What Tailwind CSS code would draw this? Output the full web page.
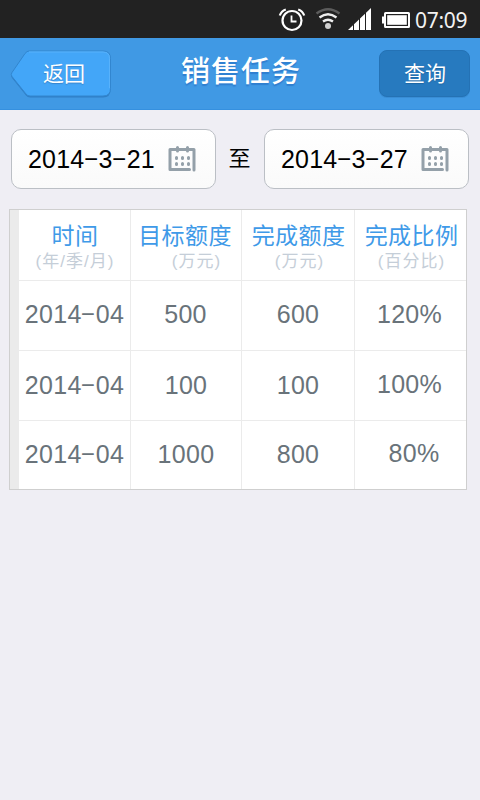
<!DOCTYPE html>
<html lang="zh-CN">
<head>
<meta charset="utf-8">
<title>销售任务</title>
<script src="https://cdn.jsdelivr.net/npm/@tailwindcss/browser@4"></script>
</head>
<body class="w-[480px] h-[800px] overflow-hidden bg-[#efeef4] font-['Liberation_Sans','Noto_Sans_CJK_SC',sans-serif]">
<div class="h-[38px] bg-[#222222] flex items-center text-white">
  <svg class="ml-[278px] w-[28px] h-[38px] shrink-0" viewBox="278 0 28 38" fill="none" stroke="#fff">
    <circle cx="292" cy="20.5" r="9.5" stroke-width="2.2"/>
    <path d="M291.5 15.5v6h5" stroke-width="1.8"/>
    <path d="M279.800 15.500q1.500-4.500 6-6M304.200 15.500q-1.500-4.500-6-6" stroke-width="2.200"/>
  </svg>
  <svg class="ml-[9px] w-[28px] h-[38px] shrink-0" viewBox="315 0 28 38" fill="none" stroke-width="2.300">
    <path d="M316.500 13.500q11.500-8.500 23 0" stroke="#5c5c5c"/>
    <path d="M319.500 17.500q8.500-6.500 17 0M323 21.500q5-3.500 10 0" stroke="#eee"/>
    <circle cx="328" cy="26" r="3" fill="#d0d0d0"/>
  </svg>
  <svg class="ml-[5px] w-[24px] h-[38px] shrink-0" viewBox="348 0 24 38">
    <path d="M348 30L371 8V30Z" fill="#fff"/>
    <path d="M353.500 20v10M359.500 15v15M365.500 8v22" stroke="#222" stroke-width="1"/>
  </svg>
  <svg class="ml-[9px] w-[30px] h-[38px] shrink-0" viewBox="381 0 30 38">
    <rect x="385" y="13" width="24" height="14" rx="0.500" fill="none" stroke="#fff" stroke-width="2"/>
    <rect x="387.200" y="15.200" width="19.600" height="9.600" fill="#fff"/>
    <rect x="382" y="16.500" width="3" height="7" fill="#fff"/>
  </svg>
  <span class="ml-[4px] mt-[2px] text-[21px] leading-[28px] tracking-[-0.3px] text-[#f2f2f2] font-['Noto_Sans',sans-serif]">07:09</span>
</div>

<div class="h-[72px] bg-[#4099e4] border-b border-[#3590df] flex items-start justify-between pt-[12px] pl-[10px] pr-[10px]">
  <div class="grid w-[102px] h-[49px]">
    <svg class="col-start-1 row-start-1 w-[102px] h-[49px]" viewBox="0 0 102 49">
      <path d="M19 1.500H93Q100.500 1.500 100.500 9V40Q100.500 47.500 93 47.500H20Q17.500 47.500 16 45.500L2 28Q0.500 25.500 2 23.500L15 4Q17 1.500 19 1.500Z" fill="#2f7fc6"/>
      <path d="M19 1H93Q100.500 1 100.500 8.500V38.500Q100.500 46 93 46H20Q17.500 46 16 44L2 26.500Q0.500 24.500 2 22.500L15 3.500Q17 1 19 1Z" fill="#43a6f8" stroke="#3286cf"/>
      <path d="M19 2H93Q99.500 2 99.500 8.500V38" fill="none" stroke="#58b2fb"/>
    </svg>
    <span class="col-start-1 row-start-1 pl-[33px] pt-[9px] text-[21px] leading-[30px] text-white [text-shadow:0_1px_1px_#3784cc]">返回</span>
  </div>
  <h1 class="mt-[4px] ml-[-9px] text-[29px] leading-[36px] tracking-[1px] font-medium text-white [text-shadow:0_2px_1px_#2f7fd0]">销售任务</h1>
  <div class="w-[91px] h-[47px] rounded-[8px] bg-[#277abf] border border-[#2472b5] shadow-[0_1px_0_#388dd6] pt-[8px] pl-px text-center text-[21px] leading-[30px] text-white [text-shadow:0_1px_1px_#1d65a3]">查询</div>
</div>

<div class="flex pt-[19px] pl-[11px] text-[25px] leading-[30px] tracking-[0.2px] text-black">
  <div class="w-[205px] h-[60px] rounded-[10px] border border-[#bbbfc5] bg-linear-to-b from-white to-[#fafafa] flex items-center pl-[16px]">
    <span class="w-[140px] whitespace-nowrap">2014<span class="inline-block w-[14.1px] text-center"><span class="inline-block -translate-y-[2.500px] scale-x-[1.900] scale-y-[0.900]">-</span></span>3<span class="inline-block w-[14.1px] text-center"><span class="inline-block -translate-y-[2.500px] scale-x-[1.900] scale-y-[0.900]">-</span></span>21</span>
    <svg class="w-[28px] h-[28px]" viewBox="0 0 28 28" fill="none" stroke="#94a0a9" stroke-linecap="round">
      <path d="M26 25V4.500H2V24.500H21.500" stroke-width="3" stroke-linejoin="round"/>
      <path d="M9.500 2.500V6M19.500 2.500V6" stroke-width="3"/>
      <path d="M8.500 12.500v1M14.500 12.500v1M20.500 12.500v1M8.500 18.500v1M14.500 18.500v1M20.500 18.500v1" stroke-width="3"/>
    </svg>
  </div>
  <span class="w-[48px] pt-[15px] pr-px text-center text-[22px]">至</span>
  <div class="w-[205px] h-[60px] rounded-[10px] border border-[#bbbfc5] bg-linear-to-b from-white to-[#fafafa] flex items-center pl-[16px]">
    <span class="w-[140px] whitespace-nowrap">2014<span class="inline-block w-[14.1px] text-center"><span class="inline-block -translate-y-[2.500px] scale-x-[1.900] scale-y-[0.900]">-</span></span>3<span class="inline-block w-[14.1px] text-center"><span class="inline-block -translate-y-[2.500px] scale-x-[1.900] scale-y-[0.900]">-</span></span>27</span>
    <svg class="w-[28px] h-[28px]" viewBox="0 0 28 28" fill="none" stroke="#94a0a9" stroke-linecap="round">
      <path d="M26 25V4.500H2V24.500H21.500" stroke-width="3" stroke-linejoin="round"/>
      <path d="M9.500 2.500V6M19.500 2.500V6" stroke-width="3"/>
      <path d="M8.500 12.500v1M14.500 12.500v1M20.500 12.500v1M8.500 18.500v1M14.500 18.500v1M20.500 18.500v1" stroke-width="3"/>
    </svg>
  </div>
</div>

<div class="mt-[20px] ml-[9px] w-[458px] h-[281px] border border-[#cfcfcf] bg-[#ebebeb] pl-[9px]">
  <div class="grid h-full grid-cols-[111px_110px_112px_111px] grid-rows-[70px_69px_69px_68px] gap-px text-[25px] leading-[30px] tracking-[0.300px] text-[#69737a] *:bg-white *:flex *:items-center *:justify-center *:whitespace-nowrap">
    <div class="flex-col pt-[3px] pl-px text-[23px] tracking-[0.4px] text-[#3f9ae8]"><span>时间</span><span class="text-[17px] leading-[22px] tracking-[1px] text-[#c5ced8]">(年/季/月)</span></div>
    <div class="flex-col pt-[3px] pr-[2px] text-[23px] tracking-[0.4px] text-[#3f9ae8]"><span>目标额度</span><span class="pl-[23px] text-[17px] leading-[22px] tracking-[1px] text-[#c5ced8]">(万元)</span></div>
    <div class="flex-col pt-[3px] pl-px text-[23px] tracking-[0.4px] text-[#3f9ae8]"><span>完成额度</span><span class="pl-[2px] text-[17px] leading-[22px] tracking-[1px] text-[#c5ced8]">(万元)</span></div>
    <div class="flex-col pt-[3px] pl-[2px] text-[23px] tracking-[0.4px] text-[#3f9ae8]"><span>完成比例</span><span class="text-[17px] leading-[22px] tracking-[1px] text-[#c5ced8]">(百分比)</span></div>

    <div class="pb-[3px]"><span>2014<span class="inline-block w-[14.1px] text-center"><span class="inline-block -translate-y-[2.500px] scale-x-[1.900] scale-y-[0.900]">-</span></span>04</span></div>
    <div class="pb-[3px] pr-px">500</div>
    <div class="pb-[3px]">600</div>
    <div class="pb-[3px] pr-[2px]">120%</div>

    <div class="pb-[2px]"><span>2014<span class="inline-block w-[14.1px] text-center"><span class="inline-block -translate-y-[2.500px] scale-x-[1.900] scale-y-[0.900]">-</span></span>04</span></div>
    <div class="pb-[2px]">100</div>
    <div class="pb-[2px]">100</div>
    <div class="pb-[4px] pr-[2px]">100%</div>

    <div class="pb-[2px]"><span>2014<span class="inline-block w-[14.1px] text-center"><span class="inline-block -translate-y-[2.500px] scale-x-[1.900] scale-y-[0.900]">-</span></span>04</span></div>
    <div class="pb-[2px]">1000</div>
    <div class="pb-[2px]">800</div>
    <div class="pb-[4px] pl-[7px]">80%</div>
  </div>
</div>
</body>
</html>
